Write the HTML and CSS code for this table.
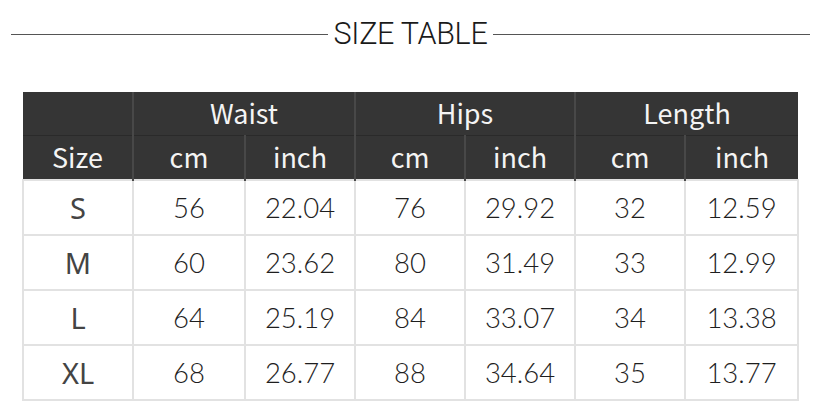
FILE: index.html
```html
<!DOCTYPE html>
<html>
<head>
<meta charset="utf-8">
<link rel="stylesheet" href="styles.css">
</head>
<body>
<div class="page">
  <div class="title-row">
    <span class="rule"></span>
    <h1 class="title">SIZE TABLE</h1>
    <span class="rule"></span>
  </div>
  <table class="size-table">
    <colgroup>
      <col class="c110"><col class="c112"><col class="c110"><col class="c110"><col class="c110"><col class="c110"><col class="c113">
    </colgroup>
    <thead>
      <tr class="h1">
        <th></th>
        <th colspan="2">Waist</th>
        <th colspan="2">Hips</th>
        <th colspan="2">Length</th>
      </tr>
      <tr class="h2">
        <th>Size</th>
        <th>cm</th><th>inch</th>
        <th>cm</th><th>inch</th>
        <th>cm</th><th>inch</th>
      </tr>
    </thead>
    <tbody>
      <tr><td class="sz">S</td><td>56</td><td>22.04</td><td>76</td><td>29.92</td><td>32</td><td>12.59</td></tr>
      <tr><td class="sz">M</td><td>60</td><td>23.62</td><td>80</td><td>31.49</td><td>33</td><td>12.99</td></tr>
      <tr><td class="sz">L</td><td>64</td><td>25.19</td><td>84</td><td>33.07</td><td>34</td><td>13.38</td></tr>
      <tr><td class="sz">XL</td><td>68</td><td>26.77</td><td>88</td><td>34.64</td><td>35</td><td>13.77</td></tr>
    </tbody>
  </table>
</div>
</body>
</html>
```
FILE: styles.css
```css
html, body {
  margin: 0;
  padding: 0;
  background: #fff;
}
.page {
  width: 819px;
  height: 420px;
  overflow: hidden;
}
.title-row {
  display: flex;
  align-items: center;
  gap: 6px;
  padding: 15px 9px 0 11px;
  height: 38px;
}
.rule {
  flex: 1;
  height: 1px;
  background: #555;
}
.title {
  margin: 0;
  font-family: Roboto, "Liberation Sans", sans-serif;
  font-weight: 300;
  font-size: 30.5px;
  line-height: 38px;
  color: #1a1a1a;
  letter-spacing: -0.3px;
}
.size-table {
  margin: 39px 0 0 22px;
  border-collapse: collapse;
  table-layout: fixed;
  width: 775px;
}
.c110 { width: 110px; }
.c112 { width: 112px; }
.c113 { width: 113px; }
.size-table th {
  background: #353535;
  color: #f4f4f4;
  font-family: "Noto Sans CJK JP", "Noto Sans", sans-serif;
  font-weight: 400;
  font-size: 27px;
  height: 43px;
  padding: 0 0 3px;
  text-align: center;
  border-left: 2px solid #484848;
  line-height: 1;
}
.size-table th:first-child { border-left: none; }
.size-table tr.h1 th { border-bottom: 1px solid #2a2a2a; height: 40px; }
.size-table tr.h2 th { height: 40px; }
.size-table td {
  height: 53px;
  padding: 0;
  text-align: center;
  font-family: Lato, "Open Sans", sans-serif;
  font-weight: 300;
  font-size: 27.5px;
  color: #1e1e1e;
  border: 2px solid #e2e2e2;
}
.size-table td.sz {
  font-family: "Noto Sans", sans-serif;
  font-weight: 400;
  color: #444;
  font-size: 29px;
}
```
